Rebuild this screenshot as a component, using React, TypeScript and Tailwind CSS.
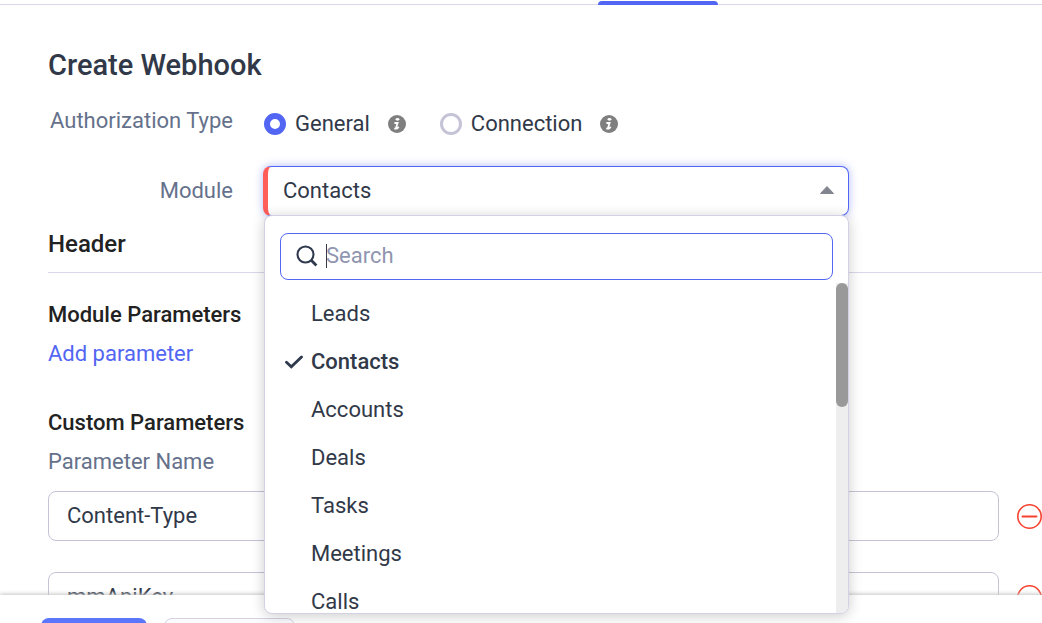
import { useState } from 'react';

const MODULES = ['Leads', 'Contacts', 'Accounts', 'Deals', 'Tasks', 'Meetings', 'Calls'];

const AUTH_TYPES = [
  { id: 'general', name: 'General' },
  { id: 'connection', name: 'Connection' },
];

const PARAMS = [
  { name: 'Content-Type', value: '' },
  { name: 'mmApiKey', value: '' },
];

function InfoIcon() {
  return (
    <svg viewBox="0 0 18 18" className="h-[18px] w-[18px]" aria-hidden="true">
      <circle cx="9" cy="9" r="9" fill="#7f7f7f" />
      <ellipse cx="9.5" cy="4.3" rx="1.9" ry="1.4" fill="#fff" />
      <path d="M6.4 8h3.2L8 13M6.2 13.6h2.6l2-1.6" fill="none" stroke="#fff" strokeWidth="1.8" />
    </svg>
  );
}

function SearchIcon() {
  return (
    <svg viewBox="0 0 22 22" className="h-[22px] w-[22px] shrink-0" fill="none" stroke="#2f394e" strokeWidth="2.1" aria-hidden="true">
      <circle cx="9.5" cy="9.5" r="8" />
      <path d="M15 15l5.4 5.4" strokeWidth="2.8" />
    </svg>
  );
}

function CheckIcon() {
  return (
    <svg viewBox="0 0 18 14" className="h-[14px] w-[18px]" fill="none" stroke="#2f394e" strokeWidth="2.8" aria-hidden="true">
      <path d="M1.5 7.2l4.8 4.6L16.5 2" strokeLinecap="round" strokeLinejoin="miter" />
    </svg>
  );
}

function RemoveIcon() {
  return (
    <svg viewBox="0 0 25 25" className="h-[25px] w-[25px]" fill="none" stroke="#f6432f" strokeWidth="1.6" aria-hidden="true">
      <circle cx="12.5" cy="12.5" r="11.7" />
      <path d="M5.5 12.5h14" strokeWidth="2" strokeLinecap="round" />
    </svg>
  );
}

export default function App() {
  const [authType, setAuthType] = useState('general');
  const [module, setModule] = useState('Contacts');
  const [open, setOpen] = useState(true);
  const [search, setSearch] = useState('');
  const [params, setParams] = useState(PARAMS);

  const updateParam = (index: number, key: 'name' | 'value', text: string) => {
    setParams(list => list.map((p, i) => (i === index ? { ...p, [key]: text } : p)));
  };

  const filtered = MODULES.filter(m => m.toLowerCase().includes(search.toLowerCase()));

  return (
    <div className="flex h-screen flex-col overflow-hidden bg-white font-[Roboto,sans-serif] text-[22px] leading-7 text-[#313949]">
      <header className="flex h-[5px] shrink-0 items-end border-b border-[#d9d7ea] pl-[598px]">
        <div className="relative top-px h-1 w-[120px] rounded-t bg-[#5266f3]" />
      </header>

      <main className="min-h-0 flex-1 pl-12 pt-11">
        <h1 className="text-[29px] font-medium leading-8 text-[#313949]">Create Webhook</h1>

        <div className="mt-[26px] flex items-start gap-[31px]">
          <span id="auth-label" className="w-[185px] text-right text-[#65718b]">Authorization Type</span>
          <div role="radiogroup" aria-labelledby="auth-label" className="mt-[3px] flex items-center gap-[34px]">
            {AUTH_TYPES.map(type => (
              <div key={type.id} className="flex items-center gap-[18px]">
                <label className="flex items-center gap-[9px]">
                  <input
                    type="radio"
                    name="auth-type"
                    checked={authType === type.id}
                    onChange={() => setAuthType(type.id)}
                    className="h-[22px] w-[22px] appearance-none rounded-full border-[3px] border-[#c5c3d6] bg-white outline-none checked:border-[6px] checked:border-[#5266f3]"
                  />
                  {type.name}
                </label>
                <InfoIcon />
              </div>
            ))}
          </div>
        </div>

        <div className="mt-7 flex items-center gap-[30px]">
          <label htmlFor="module" className="w-[185px] text-right text-[#65718b]">Module</label>
          <div className="relative w-[586px]">
            <button
              id="module"
              type="button"
              aria-haspopup="listbox"
              aria-expanded={open}
              onClick={() => setOpen(o => !o)}
              className="flex h-[50px] w-full items-center justify-between rounded-lg border border-l-[5px] border-[#5266f3] border-l-[#ff5d5a] bg-white pl-[15px] pr-[14px] text-left shadow-[0_0_8px_rgba(82,102,243,0.45)]"
            >
              {module}
              <svg viewBox="0 0 14 8" className="mb-[3px] h-2 w-[14px]" aria-hidden="true">
                <path d="M7 0.5L13.5 7.5H0.5z" fill="#82858f" stroke="#82858f" strokeLinejoin="round" />
              </svg>
            </button>

            {open && (
              <div className="absolute left-px right-0 top-[49px] z-20 overflow-hidden rounded-lg border border-[#d3d1e3] bg-white shadow-[0_2px_14px_rgba(0,0,0,0.2)]">
                <div className="px-[15px] pb-[3px] pt-[17px]">
                  <div className="flex h-[47px] items-center gap-2 rounded-lg border border-[#5266f3] px-[15px] pb-px">
                    <SearchIcon />
                    <div className="relative flex min-w-0 flex-1 items-center">
                      <input
                        type="text"
                        autoFocus
                        aria-label="Search"
                        placeholder="Search"
                        value={search}
                        onChange={e => setSearch(e.target.value)}
                        className="w-full bg-transparent caret-[#313949] outline-none placeholder:text-[#9095b0]"
                      />
                      {search === '' && <span className="pointer-events-none absolute left-0 h-6 w-px bg-[#313949]" />}
                    </div>
                  </div>
                </div>
                <div className="flex h-[330px]">
                  <ul role="listbox" aria-label="Module" className="flex-1 overflow-hidden pt-[7px]">
                    {filtered.map(name => (
                      <li
                        key={name}
                        role="option"
                        aria-selected={name === module}
                        onClick={() => setModule(name)}
                        className={name === module ? 'flex h-12 cursor-pointer items-center font-medium' : 'flex h-12 cursor-pointer items-center'}
                      >
                        <span className="flex w-[46px] shrink-0 pl-5">{name === module && <CheckIcon />}</span>
                        {name}
                      </li>
                    ))}
                  </ul>
                  <div className="w-3 bg-[#eeeeee]">
                    <div className="h-[124px] rounded-full bg-[#999999]" />
                  </div>
                </div>
              </div>
            )}
          </div>
        </div>

        <h2 className="mt-[14px] border-b border-[#d9d7ea] pb-[14px] text-2xl font-medium leading-7 text-[#222222]">Header</h2>

        <h3 className="mt-7 font-medium text-[#222222]">Module Parameters</h3>
        <a href="#add" className="mt-[11px] block w-fit text-[#5266f3]">Add parameter</a>

        <h3 className="mt-[41px] font-medium text-[#222222]">Custom Parameters</h3>
        <p className="mt-[11px] text-[#65718b]">Parameter Name</p>
        <div className="mt-[15px] flex flex-col gap-[31px]">
          {params.map((param, i) => (
            <div key={i} className="flex items-center gap-[18px]">
              <input
                type="text"
                aria-label="Parameter Name"
                value={param.name}
                onChange={e => updateParam(i, 'name', e.target.value)}
                className="h-[50px] min-w-0 flex-1 rounded-lg border border-[#c5c3d6] px-[18px] pb-0.5"
              />
              <input
                type="text"
                aria-label="Parameter Value"
                value={param.value}
                onChange={e => updateParam(i, 'value', e.target.value)}
                className="h-[50px] min-w-0 flex-1 rounded-lg border border-[#c5c3d6] px-[18px] pb-0.5"
              />
              <button
                type="button"
                aria-label="Remove parameter"
                onClick={() => setParams(list => list.filter((_, n) => n !== i))}
              >
                <RemoveIcon />
              </button>
            </div>
          ))}
        </div>
      </main>

      <footer className="relative z-10 flex h-7 shrink-0 gap-[17px] bg-white pl-[41px] pt-[23px] shadow-[0_-1px_4px_#c4c4c4]">
        <button type="button" aria-label="Save" className="h-11 w-[106px] rounded-lg bg-[#5b76fb]" />
        <button type="button" aria-label="Cancel" className="h-11 w-[131px] rounded-lg border border-[#d3d1e3] bg-[#fafaff]" />
      </footer>
    </div>
  );
}
